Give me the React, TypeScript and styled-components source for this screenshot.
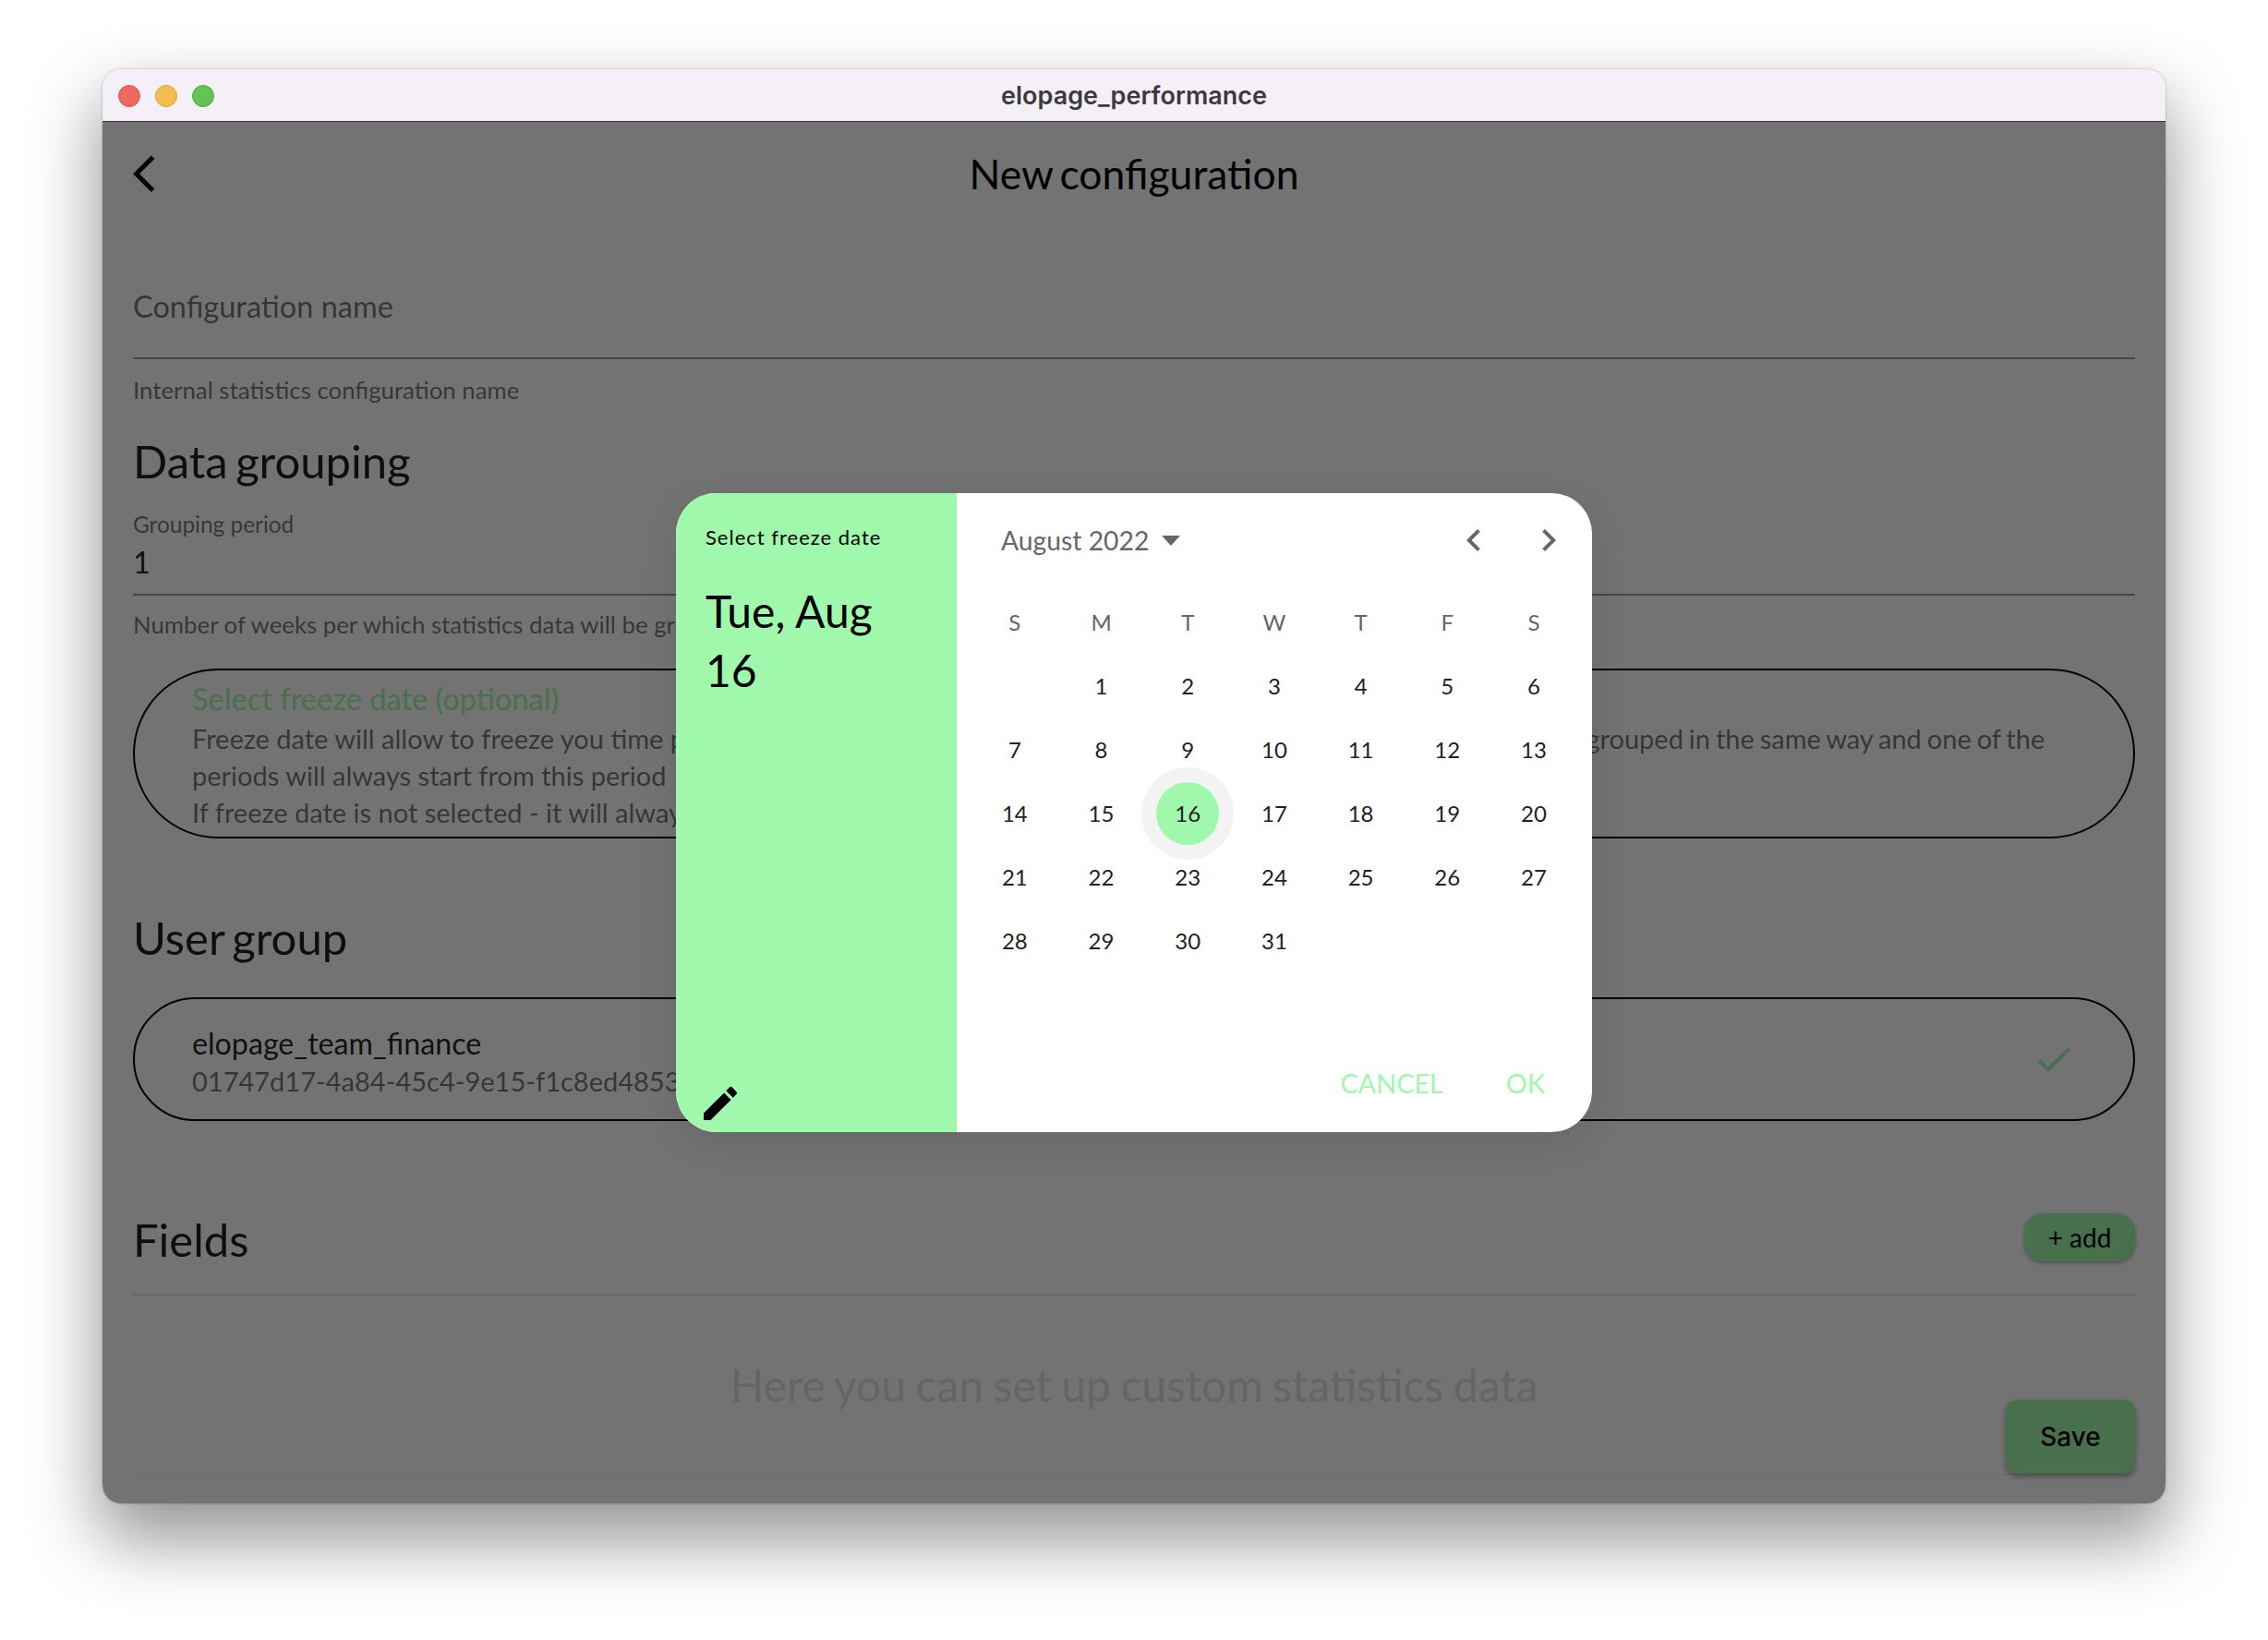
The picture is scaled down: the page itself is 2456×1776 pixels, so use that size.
import React from "react";
import styled, { createGlobalStyle } from "styled-components";

const Global = createGlobalStyle`
  html, body { margin: 0; padding: 0; background: #fff; }
  body { font-family: Lato, "Liberation Sans", sans-serif; }
  * { box-sizing: border-box; }
`;

const Stage = styled.div`
  width: 2456px;
  height: 1776px;
  padding: 75px 111px 148px 111px;
  background: #fff;
  overflow: hidden;
`;
const Win = styled.div`
  width: 2234px;
  height: 1553px;
  border-radius: 20px;
  overflow: hidden;
  display: flex;
  flex-direction: column;
  background: #fff;
  box-shadow: 0 36px 76px 4px rgba(0, 0, 0, 0.42), 0 0 2px rgba(0, 0, 0, 0.4);
`;
const TitleBar = styled.div`
  position: relative;
  height: 57px;
  flex: none;
  background: #f5f0f7;
  border-bottom: 1px solid #3c3c3c;
  display: flex;
  align-items: center;
  justify-content: center;
`;
const Lights = styled.div`
  position: absolute;
  left: 17px;
  top: 17px;
  display: flex;
  gap: 16px;
`;
const Light = styled.span<{ $c: string; $b: string }>`
  width: 24px;
  height: 24px;
  border-radius: 50%;
  background: ${(p) => p.$c};
  border: 1px solid ${(p) => p.$b};
`;
const WinTitle = styled.div`
  font-family: Inter, "Liberation Sans", sans-serif;
  font-size: 27px;
  font-weight: 600;
  color: #3b3a3d;
`;
const Main = styled.div`
  position: relative;
  flex: 1;
  padding: 0 33px;
  background: #fff;
  min-height: 0;
`;
const AppBar = styled.div`
  height: 112px;
  display: flex;
  align-items: center;
  justify-content: center;
  position: relative;
`;
const BackIcon = styled.svg`
  position: absolute;
  left: 0;
  top: 36px;
  width: 24px;
  height: 40px;
  fill: #000;
`;
const PageTitle = styled.h1`
  margin: 0;
  font-size: 44.5px;
  font-weight: 400;
  color: #000;
  line-height: 60px;
  word-spacing: -4px;
`;
const NameField = styled.div`
  padding: 68px 0 35px;
  border-bottom: 2px solid rgba(0, 0, 0, 0.38);
  font-size: 32.5px;
  line-height: 40px;
  color: rgba(0, 0, 0, 0.54);
`;
const Helper = styled.div<{ $top: number }>`
  margin-top: ${(p) => p.$top}px;
  font-size: 25.8px;
  line-height: 32px;
  color: rgba(0, 0, 0, 0.54);
  white-space: nowrap;
`;
const Heading = styled.h2<{ $top: number }>`
  margin: ${(p) => p.$top}px 0 0;
  font-size: 49px;
  line-height: 60px;
  font-weight: 400;
  word-spacing: -4px;
  color: rgba(0, 0, 0, 0.87);
`;
const SmallLabel = styled.div`
  margin-top: 24px;
  font-size: 24.4px;
  line-height: 30px;
  color: rgba(0, 0, 0, 0.54);
`;
const ValueField = styled.div`
  margin-top: 6px;
  padding-bottom: 14px;
  border-bottom: 2px solid rgba(0, 0, 0, 0.38);
  font-size: 32.5px;
  line-height: 40px;
  color: rgba(0, 0, 0, 0.87);
`;
const FreezeCard = styled.div`
  margin-top: 32px;
  height: 184px;
  border: 2px solid #000;
  border-radius: 92px;
  padding: 11px 62px 0;
`;
const FreezeTitle = styled.div`
  font-size: 32.6px;
  line-height: 40px;
  color: #9ff8ac;
`;
const FreezeText = styled.div`
  margin-top: 3px;
  font-size: 29px;
  line-height: 40px;
  color: rgba(0, 0, 0, 0.54);
  white-space: nowrap;
`;
const TightWords = styled.span`
  word-spacing: -1.5px;
`;
const GroupCard = styled.div`
  margin-top: 35px;
  height: 134px;
  border: 2px solid #000;
  border-radius: 67px;
  padding: 0 62px;
  display: flex;
  align-items: center;
  justify-content: space-between;
`;
const GroupText = styled.div`
  display: flex;
  flex-direction: column;
  padding-top: 7px;
`;
const GroupName = styled.div`
  font-size: 32.2px;
  line-height: 40px;
  color: rgba(0, 0, 0, 0.87);
`;
const GroupId = styled.div`
  margin-top: 1px;
  font-size: 29px;
  line-height: 40px;
  color: rgba(0, 0, 0, 0.54);
`;
const CheckIcon = styled.svg`
  width: 48px;
  height: 48px;
  fill: #9ff8ac;
`;
const FieldsRow = styled.div`
  margin-top: 99px;
  padding-bottom: 28px;
  border-bottom: 2px solid rgba(0, 0, 0, 0.1);
  display: flex;
  justify-content: space-between;
  align-items: flex-start;
`;
const FieldsHeading = styled.h2`
  margin: -1px 0 1px;
  font-size: 49px;
  line-height: 60px;
  font-weight: 400;
  color: rgba(0, 0, 0, 0.87);
`;
const AddButton = styled.button`
  margin-top: 1px;
  width: 120px;
  height: 52px;
  border: 0;
  border-radius: 20px;
  background: #9ff8ac;
  color: #000;
  font-family: Lato, sans-serif;
  font-size: 28px;
  padding: 0;
  box-shadow: 0 2px 4px rgba(0, 0, 0, 0.3);
`;
const EmptyHint = styled.div`
  margin-top: 64px;
  padding-bottom: 63px;
  border-bottom: 1px solid rgba(0, 0, 0, 0.08);
  font-size: 48px;
  line-height: 66px;
  word-spacing: -1.8px;
  text-align: center;
  color: #e0e0e0;
`;
const SaveButton = styled.button`
  position: absolute;
  right: 33px;
  bottom: 32px;
  width: 140px;
  height: 80px;
  border: 0;
  border-radius: 12px;
  background: #9ff8ac;
  color: #000;
  font-family: Inter, sans-serif;
  font-weight: 500;
  font-size: 28px;
  padding: 0;
  box-shadow: 0 3px 6px rgba(0, 0, 0, 0.35);
`;
const Scrim = styled.div`
  position: absolute;
  inset: 0;
  background: rgba(0, 0, 0, 0.55);
  display: flex;
  align-items: center;
  justify-content: center;
`;
const Dialog = styled.div`
  width: 992px;
  height: 692px;
  border-radius: 44px;
  overflow: hidden;
  background: #fff;
  display: flex;
  box-shadow: 0 12px 40px rgba(0, 0, 0, 0.1);
`;
const DialogSide = styled.div`
  width: 304px;
  flex: none;
  background: #9ff8ac;
  padding: 32px 32px 7px;
  display: flex;
  flex-direction: column;
`;
const SideLabel = styled.div`
  font-size: 22px;
  line-height: 32px;
  letter-spacing: 1px;
  color: #000;
`;
const SideDate = styled.div`
  margin-top: 32px;
  font-size: 48px;
  line-height: 63.5px;
  color: #000;
  flex: 1;
`;
const EditIcon = styled.svg`
  width: 48px;
  height: 48px;
  margin-left: -8px;
  fill: #000;
`;
const DialogMain = styled.div`
  flex: 1;
  display: flex;
  flex-direction: column;
  padding-left: 16px;
`;
const MonthBar = styled.div`
  height: 105px;
  padding: 27px 23px 0 32px;
  display: flex;
  align-items: flex-start;
  justify-content: space-between;
`;
const MonthPicker = styled.div`
  display: flex;
  align-items: center;
  gap: 14px;
  height: 48px;
  font-size: 28.3px;
  color: #666;
`;
const Caret = styled.span`
  width: 0;
  height: 0;
  border-left: 10px solid transparent;
  border-right: 10px solid transparent;
  border-top: 11px solid #666;
`;
const Arrows = styled.div`
  display: flex;
  gap: 33px;
`;
const Arrow = styled.svg`
  width: 48px;
  height: 48px;
  fill: #666;
`;
const CalGrid = styled.div`
  display: grid;
  grid-template-columns: repeat(7, 93.7px);
  grid-auto-rows: 69px;
  width: 656px;
`;
const DayHead = styled.div`
  display: flex;
  align-items: center;
  justify-content: center;
  font-size: 24px;
  color: #666;
`;
const Day = styled.div<{ $selected?: boolean }>`
  position: relative;
  display: flex;
  align-items: center;
  justify-content: center;
  font-size: 24px;
  color: #222;
  z-index: 0;
  ${(p) =>
    p.$selected &&
    `
    &::before {
      content: "";
      position: absolute;
      left: 50%; top: 50%;
      width: 100px; height: 100px;
      transform: translate(-50%, -50%);
      border-radius: 50%;
      background: #f3f3f3;
      z-index: -2;
    }
    &::after {
      content: "";
      position: absolute;
      left: 50%; top: 50%;
      width: 68px; height: 68px;
      transform: translate(-50%, -50%);
      border-radius: 50%;
      background: #9ff8ac;
      z-index: -1;
    }
  `}
`;
const DialogActions = styled.div`
  margin-top: auto;
  height: 75px;
  padding: 0 51px 0 0;
  display: flex;
  justify-content: flex-end;
  gap: 68px;
  font-size: 28.8px;
  line-height: 44px;
  color: #9ff8ac;
`;

const heads = ["S", "M", "T", "W", "T", "F", "S"];
const days: (number | null)[] = [null, ...Array.from({ length: 31 }, (_, i) => i + 1)];

export default function App() {
  return (
    <Stage>
      <Global />
      <Win>
        <TitleBar>
          <Lights>
            <Light $c="#ee6a5f" $b="#d5554b" />
            <Light $c="#f5bd4f" $b="#d8a03d" />
            <Light $c="#61c454" $b="#4ea844" />
          </Lights>
          <WinTitle>elopage_performance</WinTitle>
        </TitleBar>
        <Main>
          <AppBar>
            <BackIcon viewBox="0 0 12 20">
              <path d="M11.67 1.97L9.9.2 0 10.1 9.9 20l1.77-1.77L3.54 10.1z" />
            </BackIcon>
            <PageTitle>New configuration</PageTitle>
          </AppBar>
          <NameField>Configuration name</NameField>
          <Helper $top={17}>Internal statistics configuration name</Helper>
          <Heading $top={31}>Data grouping</Heading>
          <SmallLabel>Grouping period</SmallLabel>
          <ValueField>1</ValueField>
          <Helper $top={15}>Number of weeks per which statistics data will be grouped</Helper>
          <FreezeCard>
            <FreezeTitle>Select freeze date (optional)</FreezeTitle>
            <FreezeText>
              Freeze date will allow to freeze you time periods - all statistics data before and after the freeze date will now always be <TightWords>grouped in the same way and one of the</TightWords>
              <br />
              periods will always start from this period
              <br />
              If freeze date is not selected - it will always start from the current date
            </FreezeText>
          </FreezeCard>
          <Heading $top={77}>User group</Heading>
          <GroupCard>
            <GroupText>
              <GroupName>elopage_team_finance</GroupName>
              <GroupId>01747d17-4a84-45c4-9e15-f1c8ed4853a1</GroupId>
            </GroupText>
            <CheckIcon viewBox="0 0 24 24">
              <path d="M9 16.17L4.83 12l-1.42 1.41L9 19 21 7l-1.41-1.41z" />
            </CheckIcon>
          </GroupCard>
          <FieldsRow>
            <FieldsHeading>Fields</FieldsHeading>
            <AddButton>+ add</AddButton>
          </FieldsRow>
          <EmptyHint>Here you can set up custom statistics data</EmptyHint>
          <SaveButton>Save</SaveButton>
          <Scrim>
            <Dialog>
              <DialogSide>
                <SideLabel>Select freeze date</SideLabel>
                <SideDate>
                  Tue, Aug
                  <br />
                  16
                </SideDate>
                <EditIcon viewBox="0 0 24 24">
                  <path d="M3 17.25V21h3.75L17.81 9.94l-3.75-3.75L3 17.25zM20.71 7.04c.39-.39.39-1.02 0-1.41l-2.34-2.34a.9959.9959 0 0 0-1.41 0l-1.83 1.83 3.75 3.75 1.83-1.83z" />
                </EditIcon>
              </DialogSide>
              <DialogMain>
                <MonthBar>
                  <MonthPicker>
                    August 2022
                    <Caret />
                  </MonthPicker>
                  <Arrows>
                    <Arrow viewBox="0 0 24 24">
                      <path d="M15.41 7.41L14 6l-6 6 6 6 1.41-1.41L10.83 12z" />
                    </Arrow>
                    <Arrow viewBox="0 0 24 24">
                      <path d="M10 6L8.59 7.41 13.17 12l-4.58 4.59L10 18l6-6z" />
                    </Arrow>
                  </Arrows>
                </MonthBar>
                <CalGrid>
                  {heads.map((h, i) => (
                    <DayHead key={i}>{h}</DayHead>
                  ))}
                  {days.map((d, i) => (
                    <Day key={i} $selected={d === 16}>
                      {d}
                    </Day>
                  ))}
                </CalGrid>
                <DialogActions>
                  <span>CANCEL</span>
                  <span>OK</span>
                </DialogActions>
              </DialogMain>
            </Dialog>
          </Scrim>
        </Main>
      </Win>
    </Stage>
  );
}
